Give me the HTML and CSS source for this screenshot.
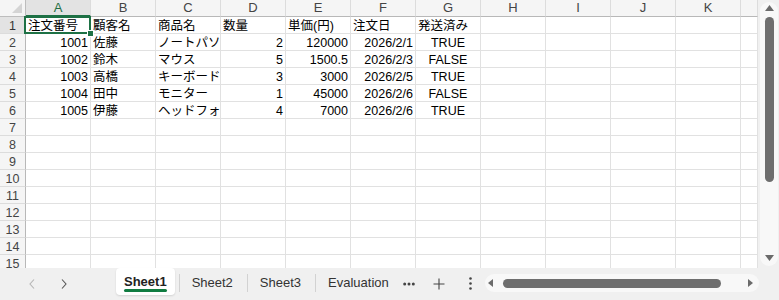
FILE: index.html
```html
<!DOCTYPE html>
<html lang="ja">
<head>
    <meta charset="UTF-8">
    <meta name="viewport" content="width=device-width, initial-scale=1.0">
    <link rel="stylesheet" href="styles.css">
</head>
<body>
    <div class="app">
        <!-- シート本体 -->
        <div class="sheet-area">
            <div class="grid" id="grid">
                <div class="corner">
                    <svg width="10" height="10" viewBox="0 0 10 10"><polygon points="10,0 10,10 0,10" fill="#d4d4d4"/></svg>
                </div>
                <!-- 選択中のセル A1 -->
                <div class="selection"><span class="handle"></span></div>
            </div>

            <!-- 縦スクロールバー -->
            <div class="vscroll">
                <div class="vtrack">
                    <svg class="arrow-up" width="9" height="6" viewBox="0 0 9 6"><polygon points="4.5,0 9,6 0,6" fill="#6b6b6b"/></svg>
                    <div class="vthumb"></div>
                    <svg class="arrow-down" width="9" height="6" viewBox="0 0 9 6"><polygon points="0,0 9,0 4.5,6" fill="#6b6b6b"/></svg>
                </div>
            </div>
        </div>

        <!-- シートタブ -->
        <div class="tabbar">
            <div class="nav">
                <span class="nav-btn disabled">
                    <svg width="6" height="10" viewBox="0 0 6 10"><polyline points="5,0.5 1,5 5,9.5" fill="none" stroke="#b5b5b5" stroke-width="1.1"/></svg>
                </span>
                <span class="nav-btn">
                    <svg width="6" height="10" viewBox="0 0 6 10"><polyline points="1,0.5 5,5 1,9.5" fill="none" stroke="#555" stroke-width="1.1"/></svg>
                </span>
            </div>
            <div class="tab active">Sheet1</div>
            <span class="sep"></span>
            <div class="tab">Sheet2</div>
            <span class="sep"></span>
            <div class="tab">Sheet3</div>
            <span class="sep"></span>
            <div class="tab">Evaluation</div>
            <span class="more">
                <svg width="12" height="4" viewBox="0 0 12 4"><circle cx="1.7" cy="2" r="1.5" fill="#444"/><circle cx="6" cy="2" r="1.5" fill="#444"/><circle cx="10.3" cy="2" r="1.5" fill="#444"/></svg>
            </span>
            <span class="add">
                <svg width="12" height="12" viewBox="0 0 12 12"><path d="M6 0.5V11.5M0.5 6H11.5" stroke="#444" stroke-width="1.1"/></svg>
            </span>
            <span class="kebab">
                <svg width="3" height="13" viewBox="0 0 3 13"><circle cx="1.5" cy="1.5" r="1.3" fill="#444"/><circle cx="1.5" cy="6.5" r="1.3" fill="#444"/><circle cx="1.5" cy="11.5" r="1.3" fill="#444"/></svg>
            </span>

            <!-- 横スクロールバー -->
            <div class="htrack">
                <svg width="5" height="8" viewBox="0 0 5 8"><polygon points="5,0 5,8 0,4" fill="#6b6b6b"/></svg>
                <div class="hthumb"></div>
                <svg width="5" height="8" viewBox="0 0 5 8"><polygon points="0,0 5,4 0,8" fill="#6b6b6b"/></svg>
            </div>
        </div>
    </div>

    <script>
        const columns = ['A', 'B', 'C', 'D', 'E', 'F', 'G', 'H', 'I', 'J', 'K', ''];
        const data = [
            ['注文番号', '顧客名', '商品名', '数量', '単価(円)', '注文日', '発送済み'],
            [1001, '佐藤', 'ノートパソコン', 2, 120000, '2026/2/1', 'TRUE'],
            [1002, '鈴木', 'マウス', 5, 1500.5, '2026/2/3', 'FALSE'],
            [1003, '高橋', 'キーボード', 3, 3000, '2026/2/5', 'TRUE'],
            [1004, '田中', 'モニター', 1, 45000, '2026/2/6', 'FALSE'],
            [1005, '伊藤', 'ヘッドフォン', 4, 7000, '2026/2/6', 'TRUE']
        ];

        const grid = document.getElementById('grid');

        function addCell(className, text) {
            const cell = document.createElement('div');
            cell.className = className;
            cell.textContent = text;
            grid.appendChild(cell);
        }

        // 列見出し
        columns.forEach((name, i) => {
            addCell(i === 0 ? 'col-head current' : 'col-head', name);
        });

        // 行 1〜15
        for (let r = 0; r < 15; r++) {
            addCell(r === 0 ? 'row-head current' : 'row-head', r + 1);
            const row = data[r] || [];
            columns.forEach((name, c) => {
                const value = row[c];
                let cls = 'cell';
                if (typeof value === 'number' || /^\d+\/\d+\/\d+$/.test(value)) {
                    cls += ' num';
                } else if (value === 'TRUE' || value === 'FALSE') {
                    cls += ' bool';
                }
                addCell(cls, value === undefined ? '' : value);
            });
        }
    </script>
</body>
</html>
```

FILE: styles.css
```css
/* 共通 */
* {
    box-sizing: border-box;
}

body {
    margin: 0;
    font-family: "Liberation Sans", "Noto Sans CJK JP", sans-serif;
    background-color: #f0f0f0;
}

.app {
    width: 779px;
    height: 300px;
    display: flex;
    flex-direction: column;
}

/* シート本体 */
.sheet-area {
    height: 268px;
    display: flex;
}

.grid {
    position: relative;
    width: 758px;
    height: 268px;
    overflow: hidden;
    display: grid;
    grid-template-columns: 26px repeat(11, 65px) 17px;
    grid-auto-rows: 17px;
    align-content: start;
    background-color: #fff;
}

.corner {
    background-color: #f5f5f5;
    border-right: 1px solid #bdbdbd;
    border-bottom: 1px solid #bdbdbd;
    display: flex;
    justify-content: flex-end;
    align-items: flex-end;
    padding: 0 3px 3px 0;
}

.col-head {
    background-color: #f5f5f5;
    border-right: 1px solid #dcdcdc;
    border-bottom: 1px solid #b8b8b8;
    text-align: center;
    font-size: 13px;
    line-height: 16px;
    color: #444;
}

.row-head {
    background-color: #f5f5f5;
    border-right: 1px solid #b8b8b8;
    border-bottom: 1px solid #dcdcdc;
    text-align: center;
    font-size: 12.5px;
    line-height: 13px;
    padding-top: 3px;
    color: #444;
}

.col-head.current,
.row-head.current {
    background-color: #e3e3e3;
}

.col-head.current {
    color: #1e6e42;
    border-bottom: 2px solid #1e7145;
}

.row-head.current {
    color: #333;
}

.cell {
    border-right: 1px solid #e1e1e1;
    border-bottom: 1px solid #e1e1e1;
    font-size: 12.5px;
    line-height: 13px;
    padding: 3px 2px 0;
    white-space: nowrap;
    overflow: hidden;
    color: #000;
}

.cell.num {
    text-align: right;
}

.cell.bool {
    text-align: center;
}

/* 選択セルの枠 */
.selection {
    position: absolute;
    left: 24px;
    top: 16px;
    width: 67px;
    height: 18px;
    border: 2px solid #1e7145;
}

.selection .handle {
    position: absolute;
    right: -5px;
    bottom: -5px;
    width: 7px;
    height: 7px;
    background-color: #1e7145;
    border: 1px solid #fff;
}

/* 縦スクロールバー */
.vscroll {
    flex: 1;
    padding: 2px 1px 2px 2px;
}

.vtrack {
    height: 100%;
    background-color: #f8f8f8;
    border-radius: 9px;
    display: flex;
    flex-direction: column;
    align-items: center;
    padding: 3px 0 5px;
}

.vthumb {
    width: 9px;
    height: 165px;
    margin-top: 6px;
    background-color: #6e6e6e;
    border-radius: 5px;
}

.arrow-down {
    margin-top: auto;
}

/* シートタブ */
.tabbar {
    height: 32px;
    display: flex;
    align-items: flex-start;
    padding-left: 16px;
    font-size: 13px;
    color: #333;
}

.nav {
    display: flex;
    margin-right: 36px;
}

.nav-btn {
    width: 32px;
    height: 31px;
    display: flex;
    align-items: center;
    justify-content: center;
}

.tab {
    height: 28px;
    padding: 1px 13px 0 11px;
    display: flex;
    align-items: center;
    white-space: nowrap;
}

.tab.active {
    position: relative;
    height: 27px;
    padding: 0 8px;
    margin-right: 3px;
    background-color: #fff;
    border-radius: 4px;
    box-shadow: 0 1px 2px rgba(0, 0, 0, 0.12);
    font-weight: bold;
    color: #222;
}

.tab.active::after {
    content: "";
    position: absolute;
    left: 8px;
    right: 8px;
    bottom: 3px;
    height: 3px;
    border-radius: 2px;
    background-color: #107c41;
}

.sep {
    width: 1px;
    height: 18px;
    margin: 6px 1px 0;
    background-color: #d2d2d2;
}

.more {
    display: flex;
    height: 31px;
    align-items: center;
    margin-left: 1px;
}

.add {
    display: flex;
    height: 31px;
    align-items: center;
    margin-left: 18px;
}

.kebab {
    display: flex;
    height: 31px;
    align-items: center;
    margin-left: 24px;
}

/* 横スクロールバー */
.htrack {
    width: 274px;
    height: 18px;
    margin: 6px 20px 0 auto;
    background-color: #f8f8f8;
    border-radius: 9px;
    display: flex;
    align-items: center;
    padding-left: 3px;
}

.hthumb {
    width: 218px;
    height: 9px;
    margin: 0 27px 0 10px;
    background-color: #6e6e6e;
    border-radius: 5px;
}
```
